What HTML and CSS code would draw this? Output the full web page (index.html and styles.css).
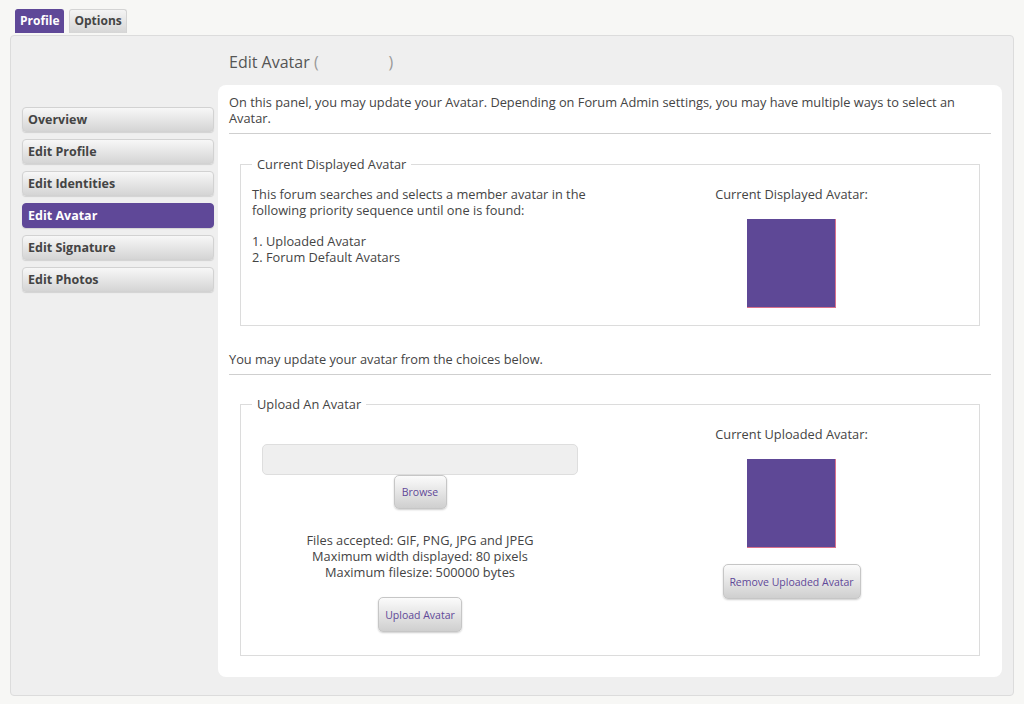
FILE: index.html
```html
<!DOCTYPE html>
<html>
<head>
<meta charset="utf-8">
<link rel="stylesheet" href="styles.css">
</head>
<body>
<div class="tabs">
  <div class="tab tab-active">Profile</div>
  <div class="tab">Options</div>
</div>
<div class="container">
  <nav class="sidebar">
    <div class="nav-btn">Overview</div>
    <div class="nav-btn">Edit Profile</div>
    <div class="nav-btn">Edit Identities</div>
    <div class="nav-btn nav-active">Edit Avatar</div>
    <div class="nav-btn">Edit Signature</div>
    <div class="nav-btn">Edit Photos</div>
  </nav>
  <main class="main">
    <h1 class="title">Edit Avatar <span class="paren">(<span class="blur"></span>)</span></h1>
    <div class="panel">
      <p class="intro">On this panel, you may update your Avatar. Depending on Forum Admin settings, you may have multiple ways to select an Avatar.</p>
      <hr class="rule">
      <fieldset class="box box-current">
        <legend>Current Displayed Avatar</legend>
        <div class="cols">
          <div class="left">
            <p class="para">This forum searches and selects a member avatar in the following priority sequence until one is found:</p>
            <p class="para">1. Uploaded Avatar<br>2. Forum Default Avatars</p>
          </div>
          <div class="right">
            <div class="label">Current Displayed Avatar:</div>
            <div class="avatar"></div>
          </div>
        </div>
      </fieldset>
      <p class="choices">You may update your avatar from the choices below.</p>
      <hr class="rule">
      <fieldset class="box box-upload">
        <legend>Upload An Avatar</legend>
        <div class="cols">
          <div class="left">
            <div class="upload">
              <div class="file-input"></div>
              <button class="btn btn-browse">Browse</button>
              <p class="info">Files accepted: GIF, PNG, JPG and JPEG<br>Maximum width displayed: 80 pixels<br>Maximum filesize: 500000 bytes</p>
              <button class="btn btn-upload">Upload Avatar</button>
            </div>
          </div>
          <div class="right">
            <div class="label">Current Uploaded Avatar:</div>
            <div class="avatar"></div>
            <button class="btn btn-remove">Remove Uploaded Avatar</button>
          </div>
        </div>
      </fieldset>
    </div>
  </main>
</div>
</body>
</html>
```
FILE: styles.css
```css
* { box-sizing: border-box; }
html, body { margin: 0; padding: 0; }
body {
  background: #f7f7f5;
  font-family: "Open Sans", "Liberation Sans", sans-serif;
  font-size: 12.8px;
  color: #444;
}
.tabs {
  display: flex;
  gap: 5px;
  padding: 9px 0 0 15px;
  height: 35px;
}
.tab {
  height: 24px;
  line-height: 22px;
  padding: 0 4px;
  font-weight: bold;
  font-size: 12px;
  color: #444;
  border: 1px solid #d4d4d4;
  border-bottom: none;
  border-radius: 3px 3px 0 0;
  background: linear-gradient(#f4f4f4, #d6d6d6);
}
.tab-active {
  background: #5f4898;
  border-color: #5f4898;
  color: #fff;
}
.container {
  margin: 0 10px;
  width: 1004px;
  height: 661px;
  background: #efefef;
  border: 1px solid #dcdcdc;
  border-radius: 4px;
  display: flex;
  gap: 4px;
  padding: 0 11px 0 11px;
}
.sidebar {
  width: 192px;
  padding-top: 71px;
  display: flex;
  flex-direction: column;
  gap: 7px;
}
.nav-btn {
  height: 25px;
  line-height: 23px;
  padding-left: 5px;
  font-weight: bold;
  font-size: 12.5px;
  color: #444;
  border: 1px solid #d2d2d2;
  border-radius: 4px;
  background: linear-gradient(#f7f7f7, #d5d5d5);
  box-shadow: 0 1px 1px rgba(0,0,0,0.12);
}
.nav-active {
  background: #5f4898;
  border-color: #5f4898;
  color: #fff;
}
.main {
  flex: 1;
  display: flex;
  flex-direction: column;
}
.title {
  margin: 15px 0 12px 11px;
  height: 22px;
  line-height: 22px;
  font-size: 16px;
  font-weight: normal;
  color: #555;
}
.paren { color: #999; }
.blur { display: inline-block; width: 70px; }
.panel {
  background: #fff;
  border-radius: 8px;
  height: 592px;
  padding: 9px 11px;
}
.intro, .choices {
  margin: 0;
  line-height: 16px;
}
.rule {
  border: none;
  border-top: 1px solid #cfcfcf;
  margin: 7px 0 0 0;
  height: 0;
}
.box {
  margin: 22px 11px 0 11px;
  border: 1px solid #dcdcdc;
  padding: 14px 0 17px 11px;
}
.box legend {
  padding: 0 5px;
  font-size: 12.8px;
  color: #444;
  line-height: 16px;
}
.cols {
  display: grid;
  grid-template-columns: 352px 1fr;
}
.para { margin: 0 0 15px 0; line-height: 16px; }
.right {
  display: flex;
  flex-direction: column;
  align-items: center;
}
.label { line-height: 16px; }
.avatar {
  width: 89px;
  height: 89px;
  margin-top: 17px;
  background: #5e4896;
  border-right: 1px solid #d9718c;
  border-bottom: 1px solid #d9718c;
}
.choices { margin-top: 25px; }
.box-upload { margin-top: 21px; padding-bottom: 23px; }
.upload {
  width: 316px;
  margin: 18px 0 0 10px;
  display: flex;
  flex-direction: column;
  align-items: center;
}
.file-input {
  width: 316px;
  height: 31px;
  background: #efefef;
  border: 1px solid #dedede;
  border-radius: 5px;
}
.btn {
  font-family: inherit;
  font-size: 10.5px;
  color: #5f4898;
  border: 1px solid #c6c6c6;
  border-radius: 5px;
  background: linear-gradient(#fbfbfb, #cfcfcf);
  box-shadow: 0 1px 2px rgba(0,0,0,0.2);
  padding: 0;
}
.btn-browse { width: 53px; height: 34px; }
.info {
  margin: 23px 0 0 0;
  text-align: center;
  line-height: 16px;
}
.btn-upload { width: 84px; height: 35px; margin-top: 17px; }
.btn-remove { width: 138px; height: 35px; margin-top: 16px; }
```
